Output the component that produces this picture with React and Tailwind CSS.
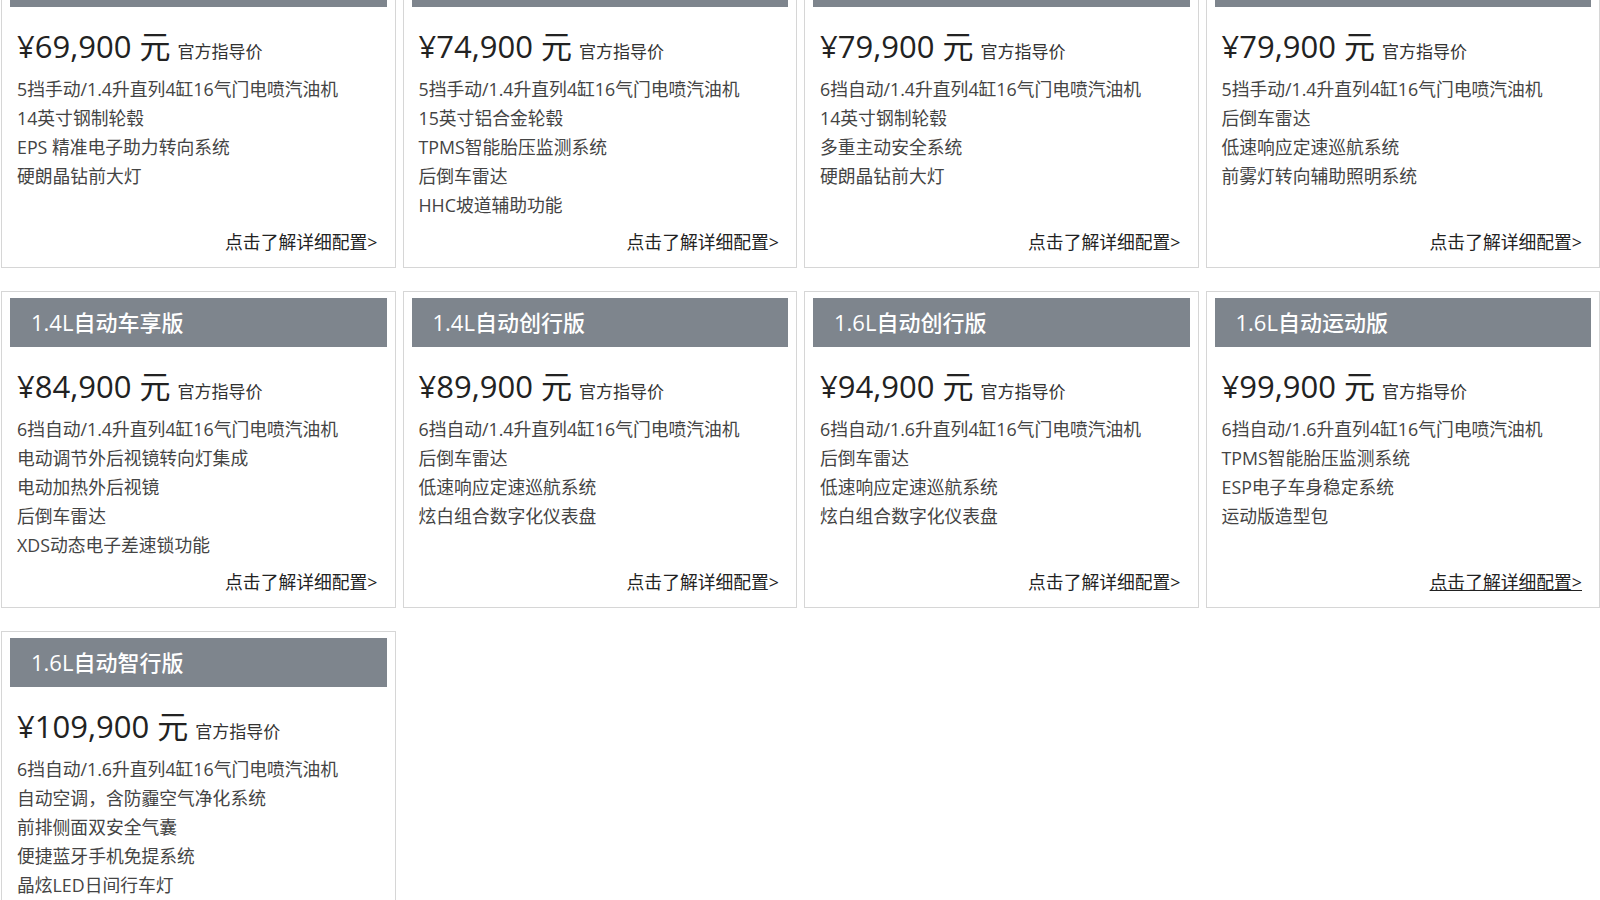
import React from "react";

const cars = [
  {
    name: "1.4L手动风尚版",
    price: "69,900",
    features: ["5挡手动/1.4升直列4缸16气门电喷汽油机", "14英寸钢制轮毂", "EPS 精准电子助力转向系统", "硬朗晶钻前大灯"],
  },
  {
    name: "1.4L手动舒适版",
    price: "74,900",
    features: ["5挡手动/1.4升直列4缸16气门电喷汽油机", "15英寸铝合金轮毂", "TPMS智能胎压监测系统", "后倒车雷达", "HHC坡道辅助功能"],
  },
  {
    name: "1.4L自动风尚版",
    price: "79,900",
    features: ["6挡自动/1.4升直列4缸16气门电喷汽油机", "14英寸钢制轮毂", "多重主动安全系统", "硬朗晶钻前大灯"],
  },
  {
    name: "1.4L手动豪华版",
    price: "79,900",
    features: ["5挡手动/1.4升直列4缸16气门电喷汽油机", "后倒车雷达", "低速响应定速巡航系统", "前雾灯转向辅助照明系统"],
  },
  {
    name: "1.4L自动车享版",
    price: "84,900",
    features: ["6挡自动/1.4升直列4缸16气门电喷汽油机", "电动调节外后视镜转向灯集成", "电动加热外后视镜", "后倒车雷达", "XDS动态电子差速锁功能"],
  },
  {
    name: "1.4L自动创行版",
    price: "89,900",
    features: ["6挡自动/1.4升直列4缸16气门电喷汽油机", "后倒车雷达", "低速响应定速巡航系统", "炫白组合数字化仪表盘"],
  },
  {
    name: "1.6L自动创行版",
    price: "94,900",
    features: ["6挡自动/1.6升直列4缸16气门电喷汽油机", "后倒车雷达", "低速响应定速巡航系统", "炫白组合数字化仪表盘"],
  },
  {
    name: "1.6L自动运动版",
    price: "99,900",
    features: ["6挡自动/1.6升直列4缸16气门电喷汽油机", "TPMS智能胎压监测系统", "ESP电子车身稳定系统", "运动版造型包"],
    hover: true,
  },
  {
    name: "1.6L自动智行版",
    price: "109,900",
    features: ["6挡自动/1.6升直列4缸16气门电喷汽油机", "自动空调，含防霾空气净化系统", "前排侧面双安全气囊", "便捷蓝牙手机免提系统", "晶炫LED日间行车灯"],
  },
];

const CarCard = ({ car }) => {
  return (
    <div className="h-[317px] border border-[#d6d6d6] bg-white px-[8px] pt-[6px] pb-[10px] flex flex-col">
      {/* Title bar */}
      <div className="h-[49px] bg-[#7e858d] pl-[21px] flex items-center text-white text-[22px] font-medium">
        {car.name}
      </div>

      {/* Price */}
      <div className="px-[7px] mt-[19px] h-[40px] flex items-baseline text-[#222]">
        <span className="text-[31px] leading-[40px]">¥{car.price} 元</span>
        <span className="text-[17px] ml-[7px] text-[#333]">官方指导价</span>
      </div>

      {/* Features */}
      <ul className="px-[7px] mt-[9px] text-[17.8px] leading-[29px] text-[#444]">
        {car.features.map((f) => (
          <li key={f}>{f}</li>
        ))}
      </ul>

      {/* Link */}
      <div className="mt-auto flex justify-end pr-[9px]">
        <a
          href="#"
          className={`text-[17.8px] leading-[29px] text-[#222] ${car.hover ? "underline" : "no-underline"}`}
        >
          点击了解详细配置&gt;
        </a>
      </div>
    </div>
  );
};

export default function App() {
  return (
    <div
      className="w-[1600px] h-[900px] overflow-hidden bg-white"
      style={{ fontFamily: '"Open Sans", "Noto Sans CJK SC", sans-serif' }}
    >
      <div className="-mt-[49px] pl-[1px] grid grid-cols-4 gap-x-[7px] gap-y-[23px]">
        {cars.map((car) => (
          <CarCard key={car.name} car={car} />
        ))}
      </div>
    </div>
  );
}
